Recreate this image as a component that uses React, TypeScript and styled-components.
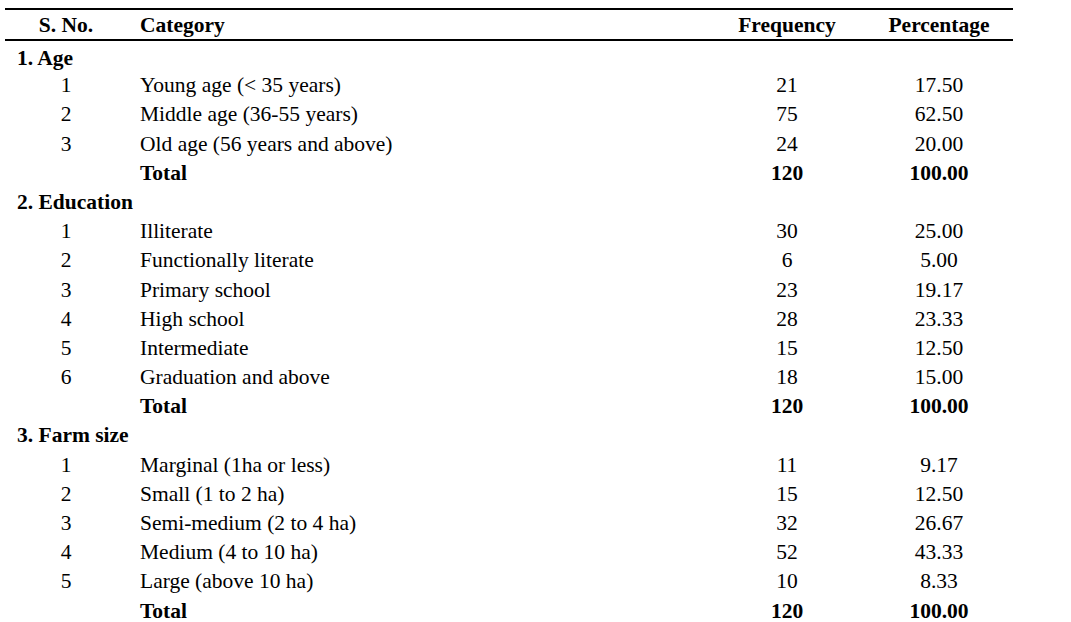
import React from "react";
import styled, { createGlobalStyle } from "styled-components";

const Global = createGlobalStyle`
  html, body { margin: 0; padding: 0; background: #ffffff; }
  body { font-family: "Liberation Serif", "Times New Roman", serif; color: #000; }
`;

const Page = styled.div`
  width: 1071px;
  height: 622px;
  padding: 8px 0 0 5px;
  box-sizing: border-box;
  overflow: hidden;
`;

const Table = styled.div`
  width: 1008px;
  display: flex;
  flex-direction: column;
  font-size: 21.5px;
`;

const cols = "122px 582px 156px 148px";

const HeadRow = styled.div`
  display: grid;
  grid-template-columns: ${cols};
  border-top: 2px solid #000;
  border-bottom: 2px solid #000;
  height: 33px;
  box-sizing: border-box;
  padding-top: 1px;
  line-height: 29px;
  font-weight: bold;
`;

const Body = styled.div`
  display: flex;
  flex-direction: column;
  padding-top: 1px;
`;

const Row = styled.div<{ $nudge?: number }>`
  display: grid;
  grid-template-columns: ${cols};
  height: 29.2px;
  line-height: 29.2px;
  box-sizing: border-box;
  padding-top: ${(p) => p.$nudge ?? 0}px;
  white-space: nowrap;
`;

const Cell = styled.div<{ $align?: "left" | "center"; $bold?: boolean }>`
  text-align: ${(p) => p.$align ?? "center"};
  font-weight: ${(p) => (p.$bold ? "bold" : "inherit")};
`;

const CategoryCell = styled(Cell)`
  padding-left: 13px;
`;

const SectionCell = styled.div`
  grid-column: 1 / -1;
  padding-left: 12px;
  font-weight: bold;
`;

type Section = {
  title: string;
  rows: [string, number, string][];
};

const sections: Section[] = [
  {
    title: "1. Age",
    rows: [
      ["Young age (< 35 years)", 21, "17.50"],
      ["Middle age (36-55 years)", 75, "62.50"],
      ["Old age (56 years and above)", 24, "20.00"],
    ],
  },
  {
    title: "2. Education",
    rows: [
      ["Illiterate", 30, "25.00"],
      ["Functionally literate", 6, "5.00"],
      ["Primary school", 23, "19.17"],
      ["High school", 28, "23.33"],
      ["Intermediate", 15, "12.50"],
      ["Graduation and above", 18, "15.00"],
    ],
  },
  {
    title: "3. Farm size",
    rows: [
      ["Marginal (1ha or less)", 11, "9.17"],
      ["Small (1 to 2 ha)", 15, "12.50"],
      ["Semi-medium (2 to 4 ha)", 32, "26.67"],
      ["Medium (4 to 10 ha)", 52, "43.33"],
      ["Large (above 10 ha)", 10, "8.33"],
    ],
  },
];

export default function App() {
  return (
    <>
      <Global />
      <Page>
        <Table>
          <HeadRow>
            <Cell>S. No.</Cell>
            <CategoryCell $align="left">Category</CategoryCell>
            <Cell>Frequency</Cell>
            <Cell>Percentage</Cell>
          </HeadRow>
          <Body>
            {sections.map((s, si) => (
              <React.Fragment key={s.title}>
                <Row $nudge={si === 0 ? 2 : 0}>
                  <SectionCell>{s.title}</SectionCell>
                </Row>
                {s.rows.map(([label, freq, pct], i) => (
                  <Row key={label}>
                    <Cell>{i + 1}</Cell>
                    <CategoryCell $align="left">{label}</CategoryCell>
                    <Cell>{freq}</Cell>
                    <Cell>{pct}</Cell>
                  </Row>
                ))}
                <Row>
                  <Cell />
                  <CategoryCell $align="left" $bold>
                    Total
                  </CategoryCell>
                  <Cell $bold>120</Cell>
                  <Cell $bold>100.00</Cell>
                </Row>
              </React.Fragment>
            ))}
          </Body>
        </Table>
      </Page>
    </>
  );
}
